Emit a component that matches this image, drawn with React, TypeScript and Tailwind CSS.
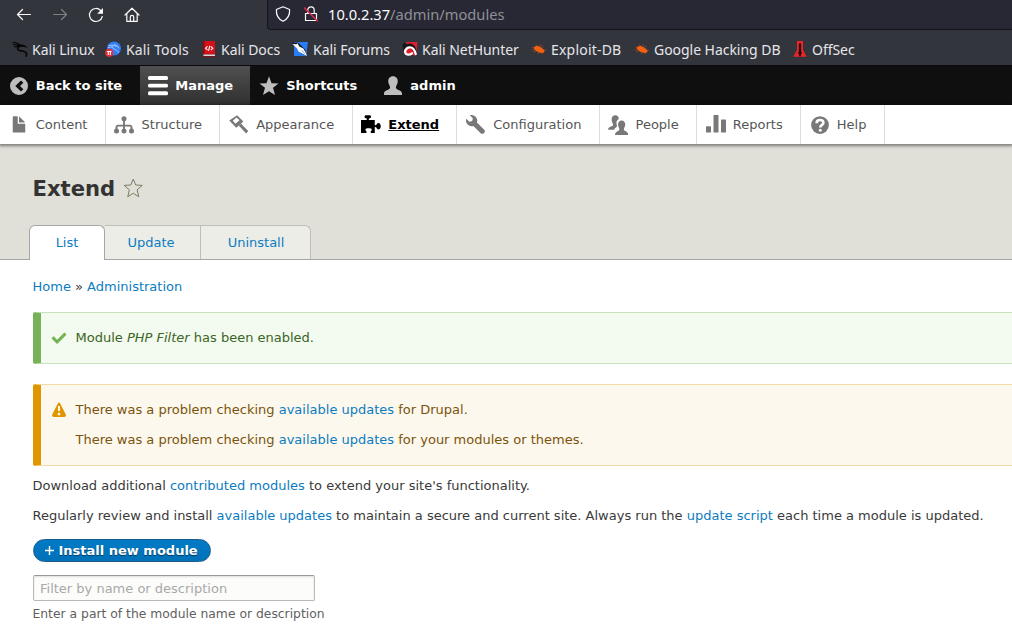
import type { ReactNode } from "react";

const Svg = ({ children, className, box = 16 }: { children: ReactNode; className: string; box?: number }) => (
  <svg viewBox={`0 0 ${box} ${box}`} className={`block shrink-0 ${className}`} fill="currentColor" aria-hidden="true">
    {children}
  </svg>
);

/* ---------- Browser chrome ---------- */

const chromeIcon = "size-4 text-[#fbfbfe]";
const stroke = { fill: "none", stroke: "currentColor", strokeWidth: 1.2, strokeLinecap: "round", strokeLinejoin: "round" } as const;

function NavBar() {
  return (
    <div className="flex h-[30px] bg-[#33353d]">
      <div className="flex w-[267px] shrink-0 items-start gap-5 pt-[7px] pl-4">
        <Svg className={chromeIcon}><path {...stroke} d="M14.500 7.500H1.500M6.500 2.500l-5 5 5 5" /></Svg>
        <Svg className="size-4 text-[#7f8085]"><path {...stroke} d="M1.500 7.500h13M9.500 2.500l5 5-5 5" /></Svg>
        <Svg className={chromeIcon}>
          <path {...stroke} d="M14.300 9.500A6.500 6.500 0 1 1 12.700 3.500" />
          <path d="M15 1v5.800H9.200z" />
        </Svg>
        <Svg className={chromeIcon}>
          <path {...stroke} d="M1 8 8 1.200 15 8M2.800 6.500V14.300H13.200V6.500M6.300 14.300V10a1.700 1.700 0 0 1 3.400 0v4.300" />
        </Svg>
      </div>
      <div className="flex flex-1 items-start rounded-bl-[4px] border-b border-l border-[#131419] bg-[#272833] pt-[6px] pl-[7px]">
        <Svg className={chromeIcon}>
          <path {...stroke} d="M8 .8 14.600 3.500c.4 5.500-1.900 9.500-6.600 11.800C3.300 13 1 9 1.400 3.500z" />
        </Svg>
        <Svg className="ml-3 size-4 text-[#fbfbfe]">
          <path {...stroke} d="M4.800 7V4a3.200 3.200 0 0 1 6.400 0v3M2.500 7.500h11v7h-11z" />
          <path d="M1 1.500 14.700 15.300" stroke="#e22850" strokeWidth="1.600" />
        </Svg>
        <div className="-mt-px ml-[9px] text-[14.670px] leading-[18px] text-[#fbfbfe]">
          10.0.2.37<span className="text-[#8f9098]">/admin/modules</span>
        </div>
      </div>
    </div>
  );
}

const Bug = () => (
  <Svg className="size-4">
    <path d="M1 6.300 4 7.400M2.200 10.800l3-.7M5 3.200l1.800 2.400M9 3l.6 2.500M12 4.500l-.7 2M7 13l.9-1.700M11 13.500l.2-1.500M15 9l-2 .3M.8 8.500l3 .4" stroke="#a84b1c" strokeWidth=".7" />
    <path fill="#f26012" d="M3 6C5 4.300 8 4.800 10.500 6.700 13 8.500 14 9.500 13.300 11c-1.500 1.500-4.800 1-6.900-.2C4.300 9.500 2.500 8 3 6z" />
  </Svg>
);

const bookmarks = [
  {
    name: "Kali Linux", cell: "w-[93px]", gap: "gap-1",
    icon: (
      <Svg className="size-4 text-[#050506]">
        <path fill="none" stroke="currentColor" strokeWidth="1.100" d="M.5 1.200 5 2l4.500 2.800M.8 3.500 5 3.800l4.300 1.500M2 6l3-.6 3.500.2" />
        <path fill="none" stroke="currentColor" strokeWidth="1.600" d="M10.500 4.300C6 4.800 4.300 7.800 7 9.200c2.500 1.200 5.500.2 7 2.500.9 1.500.5 2.800 0 4" />
        <path d="m9 3.500 4 .8 2.500 3-3.300-1.500-3.200.3z" />
      </Svg>
    ),
  },
  {
    name: "Kali Tools", cell: "w-[96px] tracking-[0.15px]", gap: "gap-[5px]",
    icon: (
      <Svg className="size-4">
        <circle cx="9" cy="7.500" r="7" fill="#2f7df6" />
        <path fill="none" stroke="#c5dcff" strokeWidth=".8" d="M3.500 4.500 8 4.200l3.500 1.500M3 6.500l5-.7c-2 3 4.500 1.500 5.500 6M9 3l4 2.500 1 2" />
        <circle cx="4.200" cy="11.800" r="4.100" fill="#e52f38" />
        <path fill="none" stroke="#fff" strokeWidth="1.100" d="M2 10.500h4.500M3.300 10.500V14M5.300 10.500V14" />
      </Svg>
    ),
  },
  {
    name: "Kali Docs", cell: "w-[91px]", gap: "gap-1",
    icon: (
      <Svg className="size-4">
        <path fill="#d60f18" d="M2 0h12v13.500H2z" />
        <path fill="#8d0a12" d="M2 0h1.500v13.500H2z" />
        <path fill="#d8d8d8" d="M2.500 13.500H14V15H2.500z" />
        <path fill="#8d0a12" d="M2 15h12v.8H2z" />
        <path fill="none" stroke="#fff" strokeWidth="1.100" d="M6.500 5.300 4.500 7.200l2 1.900M9.800 5.300l2 1.900-2 1.900M8.800 4.800l-1.300 5" />
      </Svg>
    ),
  },
  {
    name: "Kali Forums", cell: "w-[110px]", gap: "gap-[5px]",
    icon: (
      <Svg className="size-4">
        <path fill="#287ef7" d="M2 1h14l-2 14H2z" />
        <path fill="#13151c" d="M.3 1.800 6 1.500 13.500 9l1 5.800-5-2z" />
        <path fill="#fff" d="m.5 3 4 .2.8-1.200 2 3.500 4 2 2.200 3.500L15 15l-5.500-2.700-3-1.800L5 7.500z" />
        <path stroke="#287ef7" strokeWidth=".7" d="m9.500 9 3.500 3.800" />
      </Svg>
    ),
  },
  {
    name: "Kali NetHunter", cell: "w-[129px]", gap: "gap-1",
    icon: (
      <Svg className="size-4">
        <path fill="#e01e2f" d="M4 1h11.500L14 14.500 2.500 13z" />
        <path fill="#16161b" d="M.3 3.500 3 1.500 4 3l4-.5c4 .5 6 3.500 6.500 8l-3 .5L9 7 4.500 8 1.500 10z" />
        <path fill="none" stroke="#fff" strokeWidth="2.300" strokeLinecap="round" d="M10 12.300c-2.500 2-6.300 1.700-6.800-.9C2.700 8.200 5.800 5.800 9 6.500c2.900.7 3.900 3.300 4.700 6.500" />
      </Svg>
    ),
  },
  { name: "Exploit-DB", cell: "w-[103px] tracking-[0.2px]", gap: "gap-1", icon: <Bug /> },
  { name: "Google Hacking DB", cell: "w-[158px]", gap: "gap-1", icon: <Bug /> },
  {
    name: "OffSec", cell: "w-[80px]", gap: "gap-1",
    icon: (
      <Svg className="size-4">
        <path fill="#ef2228" d="M5 0h6v9l3.700 6.800H1.300L5 9z" />
        <path fill="#1d0809" d="M6.900 2.500h2.200v8l1.200 2.200H9v2.500H7v-2.500H5.700l1.200-2.200z" />
      </Svg>
    ),
  },
];

function BookmarksBar() {
  return (
    <div className="flex h-9 items-center border-b border-[#0b0b0e] bg-[#33353d] pb-px pl-3 text-[14px] tracking-[-0.04px] text-[#e6e6ea]">
      {bookmarks.map((b) => (
        <div key={b.name} className={`flex shrink-0 items-center whitespace-nowrap pt-[4px] ${b.gap} ${b.cell}`}>
          {b.icon}
          <span className="-mb-px pt-px leading-5">{b.name}</span>
        </div>
      ))}
    </div>
  );
}

/* ---------- Drupal toolbar ---------- */

const adminTabs = [
  {
    label: "Back to site", className: "", iconColor: "text-[#bebebe]",
    icon: <path fillRule="evenodd" d="M8 .8a7.200 7.200 0 1 0 0 14.400A7.200 7.200 0 0 0 8 .8zm1.600 2.800 1.900 1.800L8.800 8l2.700 2.600-1.900 1.800L5 8z" />,
  },
  {
    label: "Manage", className: "bg-linear-to-b from-[#505050] to-[#303030]", iconColor: "text-white",
    icon: (
      <>
        <rect y="0" width="16" height="3.100" rx="1.200" />
        <rect y="6.100" width="16" height="3.100" rx="1.200" />
        <rect y="12.200" width="16" height="3.100" rx="1.200" />
      </>
    ),
  },
  {
    label: "Shortcuts", className: "", iconColor: "text-[#bebebe]",
    icon: <path d="m8 .2 2 5.500 5.600.2-4.400 3.500 1.600 5.800L8 12.100l-4.800 3.100 1.600-5.800L.4 5.900 6 5.700z" />,
  },
  {
    label: "admin", className: "", iconColor: "text-[#bebebe]",
    icon: <path d="M8 .1c2.500 0 3.900 1.800 3.800 4.300 0 2.100-1.500 3.300-1.500 4.800 0 2.300 5 1.600 5 5.300 0 .4-.2.600-.5.600H1.200c-.3 0-.5-.2-.5-.600 0-3.700 5-3 5-5.300 0-1.500-1.500-2.700-1.500-4.800C4.100 1.900 5.500.1 8 .1z" />,
  },
];

function AdminBar() {
  return (
    <nav className="flex h-[39px] bg-[#0f0f0f] text-[13px] font-bold text-white">
      {adminTabs.map((t) => (
        <a key={t.label} className={`flex items-center gap-[7.080px] pr-[17.330px] pl-[8.670px] ${t.className}`}>
          <Svg className={`size-5 ${t.iconColor}`}>{t.icon}</Svg>
          <span>{t.label}</span>
        </a>
      ))}
    </nav>
  );
}

const trayItems = [
  {
    label: "Content",
    icon: <path d="M12.502 7h-5A.5.5 0 0 1 7 6.500v-5A.5.5 0 0 0 6.500 1h-3a.5.5 0 0 0-.5.500v12.029c0 .275.225.5.5.5h9.002a.5.5 0 0 0 .5-.5V7.500a.5.5 0 0 0-.5-.5zM8.502 6h4c.275 0 .34-.159.146-.354L8.355 1.354C8.160 1.159 8.002 1.225 8.002 1.500v4c0 .275.225.5.5.5z" />,
  },
  {
    label: "Structure",
    icon: (
      <>
        <circle cx="8" cy="2.900" r="2" />
        <path fill="none" stroke="currentColor" strokeWidth="1.500" d="M8 3v9.500M2 12.500V9.800Q2 8.500 3.300 8.500h9.400q1.300 0 1.300 1.300v2.700" />
        <circle cx="2" cy="12.700" r="2" />
        <circle cx="8" cy="12.700" r="2" />
        <circle cx="14" cy="12.700" r="2" />
      </>
    ),
  },
  {
    label: "Appearance",
    icon: (
      <>
        <path fillRule="evenodd" d="M6.500.2 11.500 5.200 5.800 10.200.2 4.300zM6 1.900 3 4.500l2.200 2.400 3.200-2.800z" />
        <path d="m7.800 8.500 1.900-1.700 1.300 1.500 4.400 4.500-1.700 1.900-4.400-4.700z" />
      </>
    ),
  },
  {
    label: "Extend", active: true,
    icon: <path d="M0 4h4.300c.9-.7.300-1.300-.9-1.600C2.500 2.200 2.800.1 3.600.1h3.600c.9 0 1.200 2.100.3 2.300-1.200.3-1.800.9-.9 1.600H11v4c.6.5 1.100.1 1.600-.7.6-1 1.500-1.200 2.300-.6 1.200.8 1.200 3.700 0 4.500-.8.600-1.700.4-2.300-.6-.5-.8-1-1.200-1.600-.7v4.500H8.200c-.9-.6-.7-1 0-1.600.8-.8.400-2.300-.9-2.300H4.900c-1.300 0-1.700 1.500-.9 2.300.7.600.9 1 0 1.600H0z" />,
  },
  {
    label: "Configuration",
    icon: <path fillRule="evenodd" d="M14.416 11.586l-.01-.009L8.750 5.921c.15-.449.252-.921.252-1.421A4.500 4.500 0 0 0 4.500 0c-.505 0-.981.102-1.434.255l2.431 2.431-.588 2.196-2.196.588L.268 3.025A4.500 4.500 0 0 0 0 4.500 4.500 4.500 0 0 0 4.500 9c.5 0 .972-.102 1.421-.251l5.667 5.665a2 2 0 0 0 2.828-2.828z" />,
  },
  {
    label: "People",
    icon: (
      <>
        <path d="M5.700.2c1.900 0 2.900 1.100 2.900 2.900-1.500.9-2.200 2.300-1.700 4.200.3 1.400.5 2-.6 2.700-.7.500-1.100.9-1.400 1.700H.1c0-3 4-2.200 4-4 0-1.300-1.200-1.900-1.200-4C2.900 1.500 4 .2 5.700.2z" />
        <path d="M10.900 4.300c1.900 0 2.900 1.400 2.900 3.200 0 1.800-1.100 2.500-1.100 3.800 0 1.800 3.500 1.400 3.500 4.600H5.600c0-3.200 3.500-2.800 3.500-4.600 0-1.300-1.100-2-1.100-3.800 0-1.800 1.100-3.200 2.900-3.200z" />
      </>
    ),
  },
  {
    label: "Reports",
    icon: (
      <>
        <rect y="9" width="4" height="5" rx=".5" />
        <rect x="6" y="0" width="4" height="14" rx=".5" />
        <rect x="12" y="3.500" width="4" height="10.500" rx=".5" />
      </>
    ),
  },
  {
    label: "Help",
    icon: (
      <>
        <circle cx="8" cy="8" r="7.100" />
        <path fill="none" stroke="#fff" strokeWidth="2.100" d="M5.300 6.500C5.300 4.700 6.500 4 8 4s2.700.8 2.700 2.200C10.700 8 8.200 7.800 8.200 10" />
        <circle cx="8.200" cy="12.200" r="1.200" fill="#fff" />
      </>
    ),
  },
];

function Tray() {
  return (
    <nav className="relative flex h-[39px] bg-white text-[13px] text-[#565656] shadow-[0_1px_3px_1px_rgba(0,0,0,0.45)]">
      {trayItems.map((t) => (
        <a key={t.label} className={`flex items-center gap-[7.110px] border-r border-[#ddd] pr-[17.330px] pl-[8.670px] ${t.active ? "font-bold text-black underline" : ""}`}>
          <Svg className={`size-5 ${t.active ? "text-black" : "text-[#787878]"}`}>{t.icon}</Svg>
          <span>{t.label}</span>
        </a>
      ))}
    </nav>
  );
}

/* ---------- Page ---------- */

const Link = ({ children }: { children: ReactNode }) => <a className="text-[#0b7cc2]">{children}</a>;

function PageHeader() {
  return (
    <header className="flex h-[116px] flex-col justify-between border-b border-[#a6a6a6] bg-[#e0e0d8] pl-[29px]">
      <div className="flex items-center gap-2 pt-[29px] pl-[3.500px]">
        <h1 className="pt-px text-[21.125px] leading-[29px] font-bold text-[#333]">Extend</h1>
        <Svg className="size-5 text-[#7b7b62]">
          <path fill="none" stroke="currentColor" strokeWidth=".8" strokeLinejoin="round" d="m8.200.9 2 4.700 5.200.3-4.100 3.600 1.300 5.500-4.400-2.800L3.800 15l1.300-5.500L1 5.900l5.200-.3z" />
        </Svg>
      </div>
      <div className="-mb-px flex h-[35px] text-[13px] leading-[34px] text-[#0b7cc2]">
        <a className="w-[76px] rounded-t-[6px] border border-b-0 border-[#a6a6a6] bg-white text-center">List</a>
        <a className="mb-px w-24 border-t border-r border-[#bfbfba] bg-[#ededE8] pr-[3px] text-center">Update</a>
        <a className="mb-px w-[110px] rounded-tr-[6px] border-t border-r border-[#bfbfba] bg-[#ededE8] pl-px text-center">Uninstall</a>
      </div>
    </header>
  );
}

function Messages() {
  return (
    <>
      <div className="mt-[15px] ml-[0.500px] flex h-[52px] items-center rounded-l-[2px] border-y border-l-8 border-y-[#c9e1bd] border-l-[#77b259] bg-[#f3faef] pl-[10px] text-[#3a6525]">
        <Svg className="size-4 text-[#73b355]">
          <path d="M6.464 13.676a.5.5 0 0 1-.707 0l-4.960-4.955a.5.5 0 0 1 0-.707l1.405-1.407a.5.5 0 0 1 .707 0l2.849 2.848c.194.193.513.193.707 0l6.629-6.626a.5.5 0 0 1 .707 0l1.404 1.404c.193.194.193.513 0 .707z" />
        </Svg>
        <p className="pl-[8.500px]">Module <em>PHP Filter</em> has been enabled.</p>
      </div>
      <div className="mt-5 ml-[0.500px] flex h-[82px] rounded-l-[2px] border-y border-l-8 border-y-[#f4daa6] border-l-[#e09600] bg-[#fdf8ed] pt-[17px] pl-[10px] text-[#7a540c]">
        <Svg className="size-4 text-[#e09600]">
          <path fillRule="evenodd" d="M14.660 12.316 9.344 1.683c-.738-1.476-1.946-1.476-2.685 0L1.342 12.316C.604 13.793 1.350 15 3 15h10.002c1.650 0 2.396-1.207 1.658-2.684zM7 4h2.002v5H7zm2.252 8.615a.625.625 0 0 1-.625.625h-1.250a.625.625 0 0 1-.626-.625v-1.239c0-.344.281-.625.626-.625h1.250c.344 0 .625.281.625.625z" />
        </Svg>
        <div className="-mt-[2px] flex flex-col gap-[10px] pl-[8.500px]">
          <p>There was a problem checking <Link>available updates</Link> for Drupal.</p>
          <p>There was a problem checking <Link>available updates</Link> for your modules or themes.</p>
        </div>
      </div>
    </>
  );
}

export default function App() {
  return (
    <div className="flex h-[637px] w-[1012px] flex-col overflow-hidden bg-white font-['DejaVu_Sans',sans-serif] antialiased">
      <div className="font-['Noto_Sans',sans-serif]">
        <NavBar />
        <BookmarksBar />
      </div>
      <AdminBar />
      <Tray />
      <PageHeader />
      <main className="pl-[32.500px] text-[13px] leading-5 text-[#3a3a3a]">
        <p className="pt-[17px]"><Link>Home</Link> » <Link>Administration</Link></p>
        <Messages />
        <p className="mt-[10px]">Download additional <Link>contributed modules</Link> to extend your site's functionality.</p>
        <p className="mt-[10px] whitespace-nowrap">
          Regularly review and install <Link>available updates</Link> to maintain a secure and current site. Always run the <Link>update script</Link> each time a module is updated.
        </p>
        <button className="mt-[13px] ml-[0.500px] flex h-[23px] w-[178px] items-center gap-[3.500px] rounded-full border border-[#1e5c90] bg-linear-to-b from-[#007bc6] to-[#0071b8] pl-[11px] text-[13px] font-bold text-white [text-shadow:0_1px_1px_rgba(0,0,0,0.5)]">
          <Svg className="size-[9px]" box={10}><path d="M4.200 0h1.600v4.200H10v1.600H5.800V10H4.200V5.800H0V4.200h4.200z" /></Svg>
          <span className="pl-px">Install new module</span>
        </button>
        <input
          placeholder="Filter by name or description"
          className="mt-[13px] ml-[0.500px] block h-[26px] w-[282px] rounded-[2px] border border-[#b8b8b8] border-t-[#999] bg-[#fcfcfa] px-[6px] text-[13px] shadow-[inset_0_1px_2px_rgba(0,0,0,0.12)] placeholder:text-[#a9a9a9]"
        />
        <p className="mt-[3px] text-[12.350px] text-[#5f5f5f]">Enter a part of the module name or description</p>
      </main>
    </div>
  );
}
